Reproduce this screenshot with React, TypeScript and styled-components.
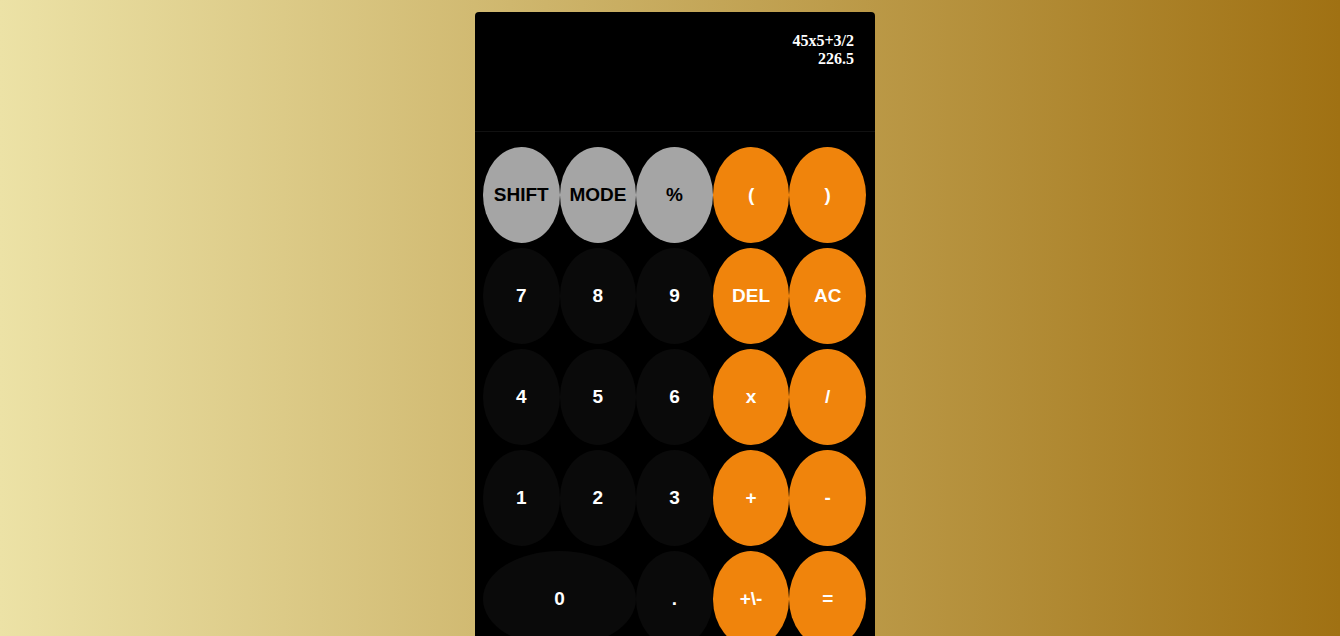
import React from "react";
import styled, { createGlobalStyle } from "styled-components";

const Global = createGlobalStyle`
  html, body {
    margin: 0;
    padding: 0;
    min-height: 100%;
  }
  body {
    min-height: 100vh;
    background: linear-gradient(to right, #ece2a6, #a07113);
    font-family: "Liberation Sans", Arial, sans-serif;
  }
`;

const Page = styled.div`
  display: flex;
  justify-content: center;
  padding: 12px 0 0 10px;
`;

const Calculator = styled.div`
  width: 400px;
  background: #000;
  border-radius: 4px 4px 0 0;
`;

const Display = styled.div`
  height: 120px;
  box-sizing: border-box;
  padding: 20px 21px 0 0;
  text-align: right;
  color: #fff;
  font-family: "Liberation Serif", "Times New Roman", serif;
  font-weight: bold;
  font-size: 16px;
  line-height: 18px;
  border-bottom: 1px solid #111;
`;

const Keys = styled.div`
  display: grid;
  grid-template-columns: repeat(5, 1fr);
  grid-auto-rows: 96px;
  row-gap: 5px;
  padding: 15px 9px 0 8px;
`;

type Kind = "fn" | "num" | "op";

const colors: Record<Kind, { bg: string; fg: string }> = {
  fn: { bg: "#a5a5a5", fg: "#000" },
  num: { bg: "#0a0a0a", fg: "#fff" },
  op: { bg: "#f0840c", fg: "#fff" },
};

const Key = styled.button<{ $kind: Kind; $span?: number }>`
  border: none;
  border-radius: 50%;
  margin: 0;
  padding: 0;
  background: ${(p) => colors[p.$kind].bg};
  color: ${(p) => colors[p.$kind].fg};
  font-family: "Liberation Sans", Arial, sans-serif;
  font-weight: bold;
  font-size: 19px;
  grid-column: span ${(p) => p.$span ?? 1};
  cursor: pointer;
`;

const keys: { label: string; kind: Kind; span?: number }[] = [
  { label: "SHIFT", kind: "fn" },
  { label: "MODE", kind: "fn" },
  { label: "%", kind: "fn" },
  { label: "(", kind: "op" },
  { label: ")", kind: "op" },
  { label: "7", kind: "num" },
  { label: "8", kind: "num" },
  { label: "9", kind: "num" },
  { label: "DEL", kind: "op" },
  { label: "AC", kind: "op" },
  { label: "4", kind: "num" },
  { label: "5", kind: "num" },
  { label: "6", kind: "num" },
  { label: "x", kind: "op" },
  { label: "/", kind: "op" },
  { label: "1", kind: "num" },
  { label: "2", kind: "num" },
  { label: "3", kind: "num" },
  { label: "+", kind: "op" },
  { label: "-", kind: "op" },
  { label: "0", kind: "num", span: 2 },
  { label: ".", kind: "num" },
  { label: "+\\-", kind: "op" },
  { label: "=", kind: "op" },
];

export default function App() {
  return (
    <>
      <Global />
      <Page>
        <Calculator>
          <Display>
            <div>45x5+3/2</div>
            <div>226.5</div>
          </Display>
          <Keys>
            {keys.map((k) => (
              <Key key={k.label} $kind={k.kind} $span={k.span}>
                {k.label}
              </Key>
            ))}
          </Keys>
        </Calculator>
      </Page>
    </>
  );
}
